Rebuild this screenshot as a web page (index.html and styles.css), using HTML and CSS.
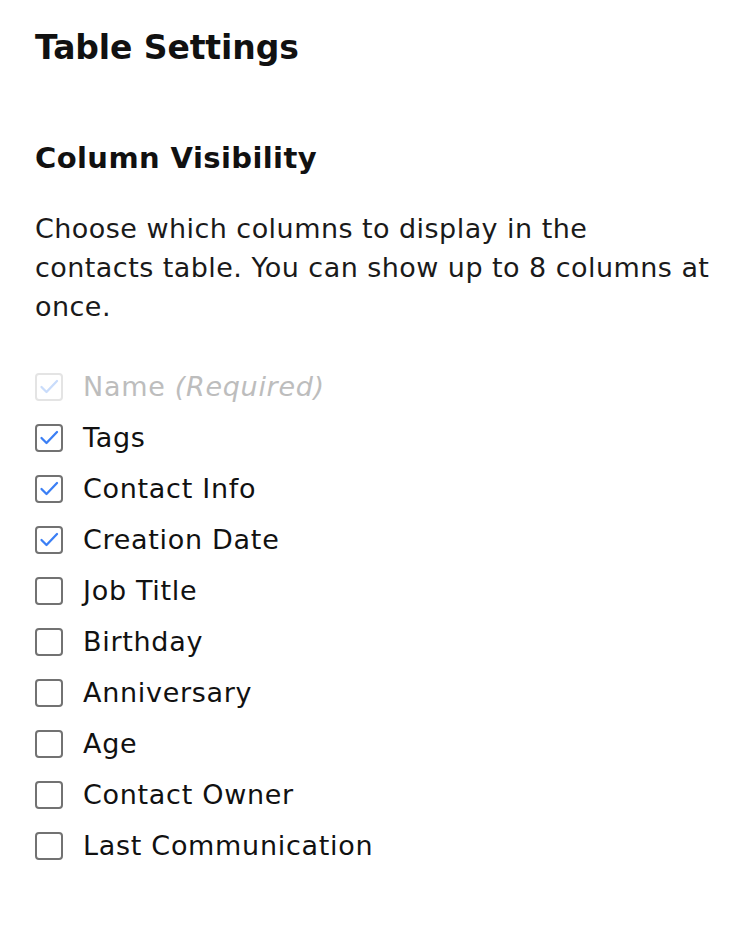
FILE: index.html
```html
<!DOCTYPE html>
<html>
<head>
<meta charset="utf-8">
<link rel="stylesheet" href="styles.css">
</head>
<body>
<main class="panel">
  <h1 class="title">Table Settings</h1>
  <h2 class="subtitle">Column Visibility</h2>
  <p class="desc">Choose which columns to display in the contacts table. You can show up to 8 columns at once.</p>
  <ul class="list">
    <li class="item disabled"><span class="box checked"><svg viewBox="0 0 24 24"><path d="M4.5 12l5 5 10.5-11"/></svg></span><span class="label">Name <em>(Required)</em></span></li>
    <li class="item"><span class="box checked"><svg viewBox="0 0 24 24"><path d="M4.5 12l5 5 10.5-11"/></svg></span><span class="label">Tags</span></li>
    <li class="item"><span class="box checked"><svg viewBox="0 0 24 24"><path d="M4.5 12l5 5 10.5-11"/></svg></span><span class="label">Contact Info</span></li>
    <li class="item"><span class="box checked"><svg viewBox="0 0 24 24"><path d="M4.5 12l5 5 10.5-11"/></svg></span><span class="label">Creation Date</span></li>
    <li class="item"><span class="box"></span><span class="label">Job Title</span></li>
    <li class="item"><span class="box"></span><span class="label">Birthday</span></li>
    <li class="item"><span class="box"></span><span class="label">Anniversary</span></li>
    <li class="item"><span class="box"></span><span class="label">Age</span></li>
    <li class="item"><span class="box"></span><span class="label">Contact Owner</span></li>
    <li class="item"><span class="box"></span><span class="label">Last Communication</span></li>
  </ul>
</main>
</body>
</html>
```
FILE: styles.css
```css
html, body {
  margin: 0;
  padding: 0;
  background: #ffffff;
}
body {
  font-family: "DejaVu Sans", sans-serif;
  color: #111111;
}
.panel {
  padding: 26px 0 40px 35px;
  width: 715px;
}
.title {
  margin: 0;
  font-size: 33px;
  font-weight: 700;
  line-height: 44px;
  letter-spacing: -0.1px;
}
.subtitle {
  margin: 69px 0 0 0;
  font-size: 29px;
  font-weight: 700;
  line-height: 38px;
  letter-spacing: 0.4px;
}
.desc {
  margin: 32px 0 0 0;
  max-width: 677px;
  font-size: 27px;
  line-height: 39px;
  letter-spacing: 0.45px;
  color: #1a1a1a;
}
.list {
  list-style: none;
  margin: 35px 0 0 0;
  padding: 0;
  display: flex;
  flex-direction: column;
}
.item {
  display: flex;
  align-items: center;
  gap: 20px;
  height: 51px;
  font-size: 27px;
  letter-spacing: 0.7px;
}
.box {
  width: 24px;
  height: 24px;
  border: 2px solid #727272;
  border-radius: 4px;
  display: flex;
  align-items: center;
  justify-content: center;
  flex: none;
}
.box svg {
  width: 24px;
  height: 24px;
  fill: none;
  stroke: #3b7ff5;
  stroke-width: 2.3;
  stroke-linecap: round;
  stroke-linejoin: round;
}
.label {
  color: #111111;
  line-height: normal;
}
.disabled .box {
  border-color: #e4e4e4;
}
.disabled .box svg {
  stroke: #c9dcfb;
}
.disabled .label {
  color: #bdbdbd;
}
.disabled em {
  font-style: italic;
}
```
